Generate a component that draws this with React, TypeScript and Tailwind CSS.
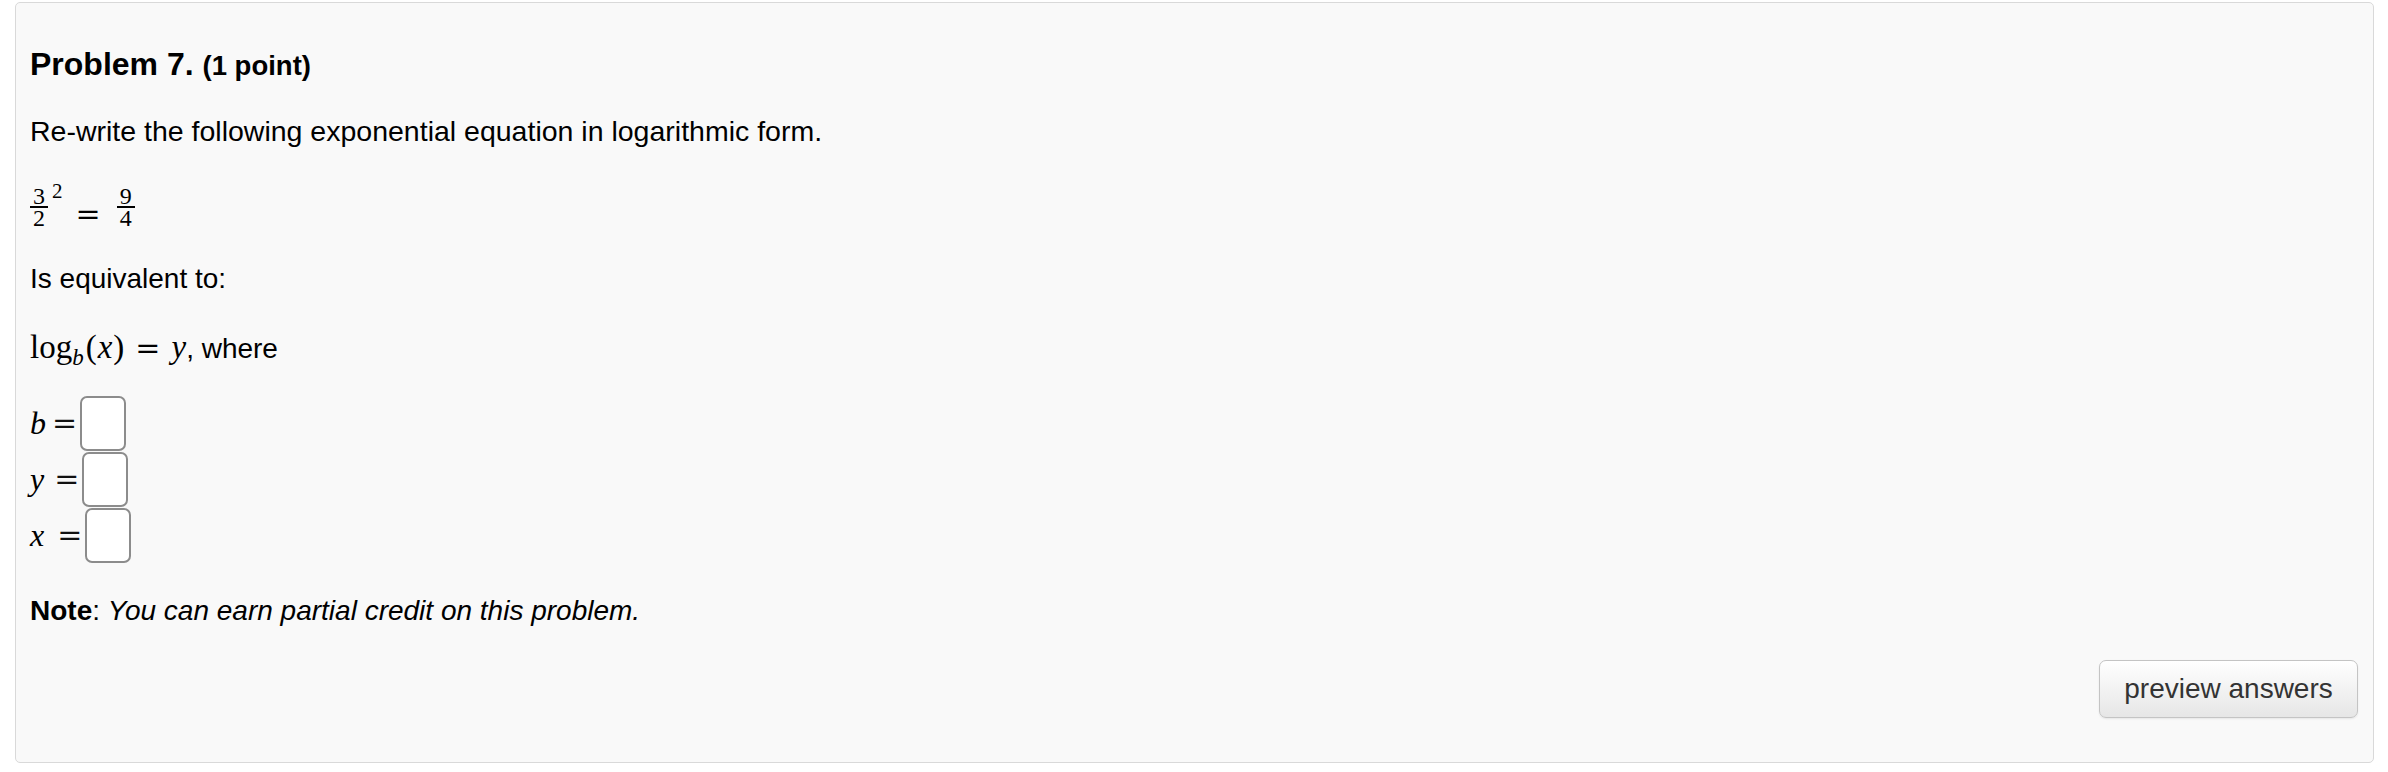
const sans = "font-['Liberation_Sans',Arial,sans-serif]";
const serif = "font-['Liberation_Serif','Times_New_Roman',serif]";
const eq = "font-['DejaVu_Serif',serif]";

function Frac({ num, den }: { num: string; den: string }) {
  return (
    <span className={`inline-flex flex-col items-center ${serif} text-[24px] leading-[17px] mt-[6px]`}>
      <span className="px-[3px]">{num}</span>
      <span className="self-stretch h-[1.5px] bg-black mt-[1px]" />
      <span className="px-[3px] pt-[2px]">{den}</span>
    </span>
  );
}

function AnswerRow({ name, gap }: { name: string; gap: string }) {
  return (
    <div className="flex items-center h-[56px]">
      <span className={`${serif} italic text-[32px] leading-[32px]`}>{name}</span>
      <span className={`${eq} text-[30px] leading-[32px] ${gap} mr-[3px] text-[#111]`}>=</span>
      <input
        type="text"
        className="w-[46px] h-[55px] border-2 border-[#8c8c8c] rounded-[7px] bg-white outline-none"
      />
    </div>
  );
}

export default function App() {
  return (
    <div className="w-[2388px] h-[772px] bg-white pt-[2px] pl-[15px] pr-[14px]">
      <div className={`h-[761px] border border-[#d9d9d9] rounded-[5px] bg-[#f9f9f9] flex flex-col pl-[14px] pr-[15px] text-black ${sans}`}>
        {/* Title */}
        <h3 className="mt-[43px] h-[36px] leading-[36px] font-bold text-[32px]">
          Problem 7. <span className="text-[27.5px]">(1 point)</span>
        </h3>

        <p className="mt-[31px] h-[36px] leading-[36px] text-[28.5px]">
          Re-write the following exponential equation in logarithmic form.
        </p>

        {/* 3/2 ^ 2 = 9/4 */}
        <div className="mt-[33px] h-[50px] flex items-start">
          <Frac num="3" den="2" />
          <span className={`${serif} text-[21px] leading-[20px] ml-[4px] mt-[-1px]`}>2</span>
          <span className={`${eq} text-[30px] leading-[32px] ml-[13px] mt-[16px]`}>=</span>
          <span className="ml-[16px]">
            <Frac num="9" den="4" />
          </span>
        </div>

        <p className="mt-[29px] h-[36px] leading-[36px] text-[28px]">Is equivalent to:</p>

        {/* log_b(x) = y, where */}
        <p className="mt-[32px] h-[36px] leading-[36px] text-[28px] whitespace-nowrap">
          <span className={`${serif} text-[33px]`}>
            log<span className="italic text-[23px] align-[-0.3em]">b</span>
            <span className="ml-[2px]">(</span>
            <span className="italic px-[1px]">x</span>)
          </span>
          <span className={`${eq} text-[30px] mx-[11px]`}>=</span>
          <span className={`${serif} italic text-[33px]`}>y</span>, where
        </p>

        <div className="mt-[30px] flex flex-col">
          <AnswerRow name="b" gap="ml-[6px]" />
          <AnswerRow name="y" gap="ml-[10px]" />
          <AnswerRow name="x" gap="ml-[13px]" />
        </div>

        <p className="mt-[30px] h-[36px] leading-[36px] text-[28px]">
          <b>Note</b>: <i>You can earn partial credit on this problem.</i>
        </p>

        <div className="mt-[31px] flex justify-end">
          <button className="w-[259px] h-[58px] border border-[#c4c4c4] rounded-[7px] bg-gradient-to-b from-white to-[#e6e6e6] text-[28px] text-[#333] shadow-[0_1px_2px_rgba(0,0,0,0.08)]">
            preview answers
          </button>
        </div>
      </div>
    </div>
  );
}
